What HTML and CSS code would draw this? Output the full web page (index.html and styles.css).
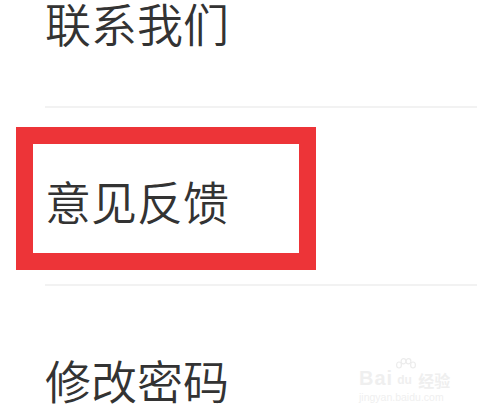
FILE: index.html
```html
<!DOCTYPE html>
<html lang="zh-CN">
<head>
    <meta charset="UTF-8">
    <meta name="viewport" content="width=device-width, initial-scale=1.0">
    <title>设置</title>
    <link rel="stylesheet" href="styles.css">
</head>
<body>

    <div class="page">
        <!-- Settings list -->
        <ul class="menu">
            <li class="menu-item"><span>联系我们</span></li>
            <li class="menu-item"><span>意见反馈</span></li>
            <li class="menu-item"><span>修改密码</span></li>
        </ul>

        <!-- Highlight box drawn over the screenshot -->
        <div class="highlight"></div>

        <!-- Watermark -->
        <div class="watermark">
            <div class="wm-top">
                <span class="wm-bai">Bai</span>
                <span class="wm-du">
                    <svg class="wm-paw" width="24" height="16" viewBox="0 0 24 16">
                        <ellipse cx="5" cy="7" rx="2.4" ry="3" fill="none" stroke="#ececec" stroke-width="1.2"/>
                        <ellipse cx="9.5" cy="3.2" rx="2.4" ry="2.6" fill="none" stroke="#ececec" stroke-width="1.2"/>
                        <ellipse cx="14.5" cy="3.2" rx="2.4" ry="2.6" fill="none" stroke="#ececec" stroke-width="1.2"/>
                        <ellipse cx="19" cy="7" rx="2.4" ry="3" fill="none" stroke="#ececec" stroke-width="1.2"/>
                    </svg>
                    <span class="wm-du-text">du</span>
                </span>
                <span class="wm-jy">经验</span>
            </div>
            <div class="wm-url">jingyan.baidu.com</div>
        </div>
    </div>

</body>
</html>
```

FILE: styles.css
```css
body {
    margin: 0;
    background-color: #ffffff;
    font-family: "Noto Sans CJK SC", "Noto Sans", sans-serif;
    color: #333333;
    overflow: hidden;
}

.page {
    position: relative;
    width: 477px;
    height: 415px;
    overflow: hidden;
}

/* Settings list */
.menu {
    list-style: none;
    margin: -70px 0 0 0;
    padding: 0;
}

.menu-item {
    height: 178px;
    box-sizing: border-box;
    padding-top: 7px;
    margin-left: 45px;
    display: flex;
    align-items: center;
    border-bottom: 2px solid #f2f2f2;
    font-size: 46px;
    font-weight: 350;
    line-height: 1;
}

.menu-item:last-child {
    border-bottom: none;
}

/* Red annotation box */
.highlight {
    position: absolute;
    left: 16px;
    top: 127px;
    width: 300px;
    height: 143px;
    box-sizing: border-box;
    border: 17px solid #ed3438;
}

/* Baidu jingyan watermark */
.watermark {
    position: absolute;
    left: 359px;
    top: 358px;
    color: #efefef;
    font-family: "Liberation Sans", Arial, sans-serif;
}

.wm-top {
    display: flex;
    align-items: flex-end;
    height: 30px;
}

.wm-bai {
    font-size: 20px;
    font-weight: bold;
    line-height: 1;
    letter-spacing: 1px;
}

.wm-du {
    position: relative;
    display: inline-block;
    width: 22px;
    height: 16px;
    margin: 0 1px 0 2px;
}

.wm-paw {
    position: absolute;
    left: -1px;
    top: -14px;
}

.wm-du-text {
    position: absolute;
    left: 2px;
    bottom: 1px;
    font-size: 12px;
    font-weight: bold;
}

.wm-jy {
    font-family: "Noto Sans CJK SC", sans-serif;
    font-size: 16px;
    font-weight: bold;
    line-height: 1;
}

.wm-url {
    font-size: 10.5px;
    margin-top: 3px;
}
```
